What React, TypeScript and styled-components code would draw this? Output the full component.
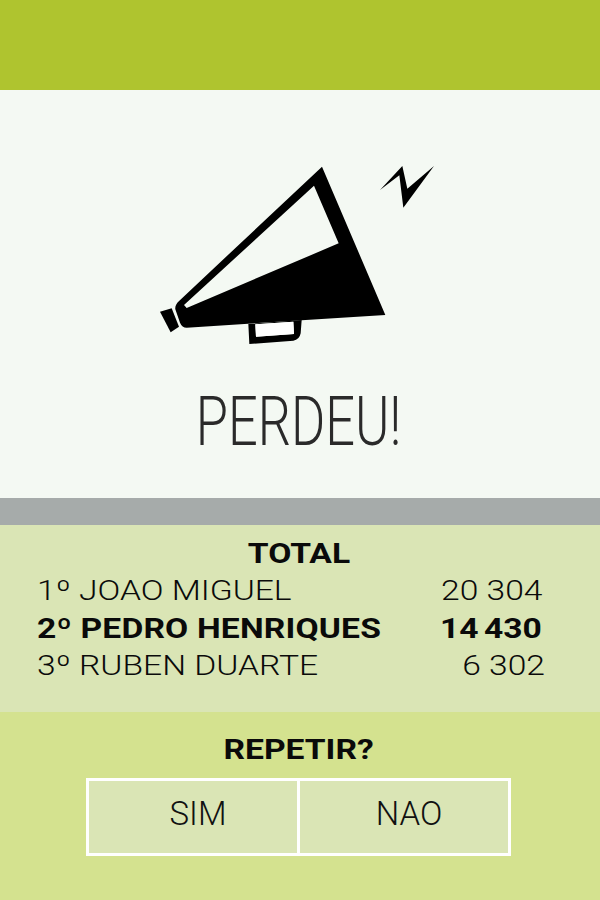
import styled, { createGlobalStyle } from "styled-components";

const GlobalStyle = createGlobalStyle`
  html, body {
    margin: 0;
    padding: 0;
    background: #f4f9f3;
  }
  body {
    font-family: Roboto, "Liberation Sans", sans-serif;
  }
`;

const players = [
  { name: "1º JOAO MIGUEL", score: "20 304", bold: false, inset: 3 },
  { name: "2º PEDRO HENRIQUES", score: "14 430", bold: true, inset: 3 },
  { name: "3º RUBEN DUARTE", score: "6 302", bold: false, inset: 0 },
];

const Megaphone = () => (
  <IconSvg viewBox="0 0 930 630" width="310" height="210">
    <path
      fillRule="evenodd"
      d="M546 50 L736 495 L140 533 Q126 533 120 518 L106 478 Q104 464 118 452 Z M522 107 L132 465 L140 474 L596 280 Z"
    />
    <path
      fillRule="evenodd"
      d="M325 522 L485 510 L482 550 Q478 570 460 572 L328 582 Z M346 523 L348 560 L462 552 L460 515 Z"
    />
    <path d="M346 523 L460 515 L462 552 L348 560 Z" fill="#fff" />
    <path d="M60 485 L95 475 L117 530 L92 547 Z" />
    <path d="M720 120 L787 48 L802 116 L882 48 L790 173 L778 76 Z" />
  </IconSvg>
);

export default function App() {
  return (
    <Page>
      <GlobalStyle />
      <TopBar />
      <Hero>
        <Megaphone />
        <Result>PERDEU!</Result>
      </Hero>
      <Divider />
      <Scores>
        <ScoresTitle>TOTAL</ScoresTitle>
        {players.map((p) => (
          <ScoreRow key={p.name} $bold={p.bold}>
            <PlayerName $bold={p.bold}>{p.name}</PlayerName>
            <PlayerScore $bold={p.bold} $inset={p.inset}>
              {p.score}
            </PlayerScore>
          </ScoreRow>
        ))}
      </Scores>
      <Repeat>
        <RepeatTitle>REPETIR?</RepeatTitle>
        <Choices>
          <Choice>SIM</Choice>
          <Choice>NAO</Choice>
        </Choices>
      </Repeat>
    </Page>
  );
}

const Page = styled.div`
  width: 600px;
  height: 900px;
  display: flex;
  flex-direction: column;
  overflow: hidden;
`;
const TopBar = styled.div`
  height: 90px;
  background: #afc42f;
`;
const Hero = styled.div`
  height: 408px;
  background: #f4f9f3;
  display: flex;
  flex-direction: column;
  align-items: center;
  padding-top: 60px;
  box-sizing: border-box;
`;
const IconSvg = styled.svg`
  display: block;
  flex: none;
  margin-left: -10px;
`;
const Result = styled.h1`
  margin: 22px 2px 0 0;
  font-size: 68px;
  line-height: 80px;
  font-weight: 300;
  color: #2a2a2a;
  transform: scaleX(0.77);
`;
const Divider = styled.div`
  height: 27px;
  background: #a6abaa;
`;
const Scores = styled.div`
  height: 187px;
  background: #dae5b5;
  box-sizing: border-box;
  padding: 10px 55px 0 37px;
  color: #0a0a0a;
`;
const ScoresTitle = styled.div`
  font-size: 28px;
  line-height: 37px;
  font-weight: 700;
  text-align: center;
  margin-right: -16px;
  transform: scaleX(1.2);
`;
const ScoreRow = styled.div<{ $bold: boolean }>`
  display: flex;
  justify-content: space-between;
  font-size: 28px;
  line-height: 37.5px;
  font-weight: ${(p) => (p.$bold ? 700 : 300)};
`;
const PlayerName = styled.span<{ $bold: boolean }>`
  display: inline-block;
  letter-spacing: ${(p) => (p.$bold ? "0.14px" : "0")};
  transform: scaleX(1.2);
  transform-origin: left center;
`;
const PlayerScore = styled.span<{ $bold: boolean; $inset: number }>`
  display: inline-block;
  margin-right: ${(p) => p.$inset}px;
  word-spacing: ${(p) => (p.$bold ? "-2.5px" : "0")};
  transform: scaleX(1.2);
  transform-origin: right center;
`;
const Repeat = styled.div`
  flex: 1;
  background: #d4e28f;
  display: flex;
  flex-direction: column;
  align-items: center;
  padding-top: 19px;
`;
const RepeatTitle = styled.div`
  font-size: 28px;
  line-height: 38px;
  font-weight: 700;
  color: #0a0a0a;
  margin-left: -3px;
  transform: scaleX(1.2);
`;
const Choices = styled.div`
  width: 425px;
  height: 78px;
  margin: 9px 0 0 -3px;
  box-sizing: border-box;
  border: 3px solid #fff;
  background: #fff;
  display: grid;
  grid-template-columns: 1fr 1fr;
  gap: 3px;
`;
const Choice = styled.div`
  background: #dae5b5;
  display: flex;
  align-items: center;
  justify-content: center;
  padding: 0 0 7px 10px;
  font-size: 33px;
  font-weight: 300;
  color: #111;
`;
